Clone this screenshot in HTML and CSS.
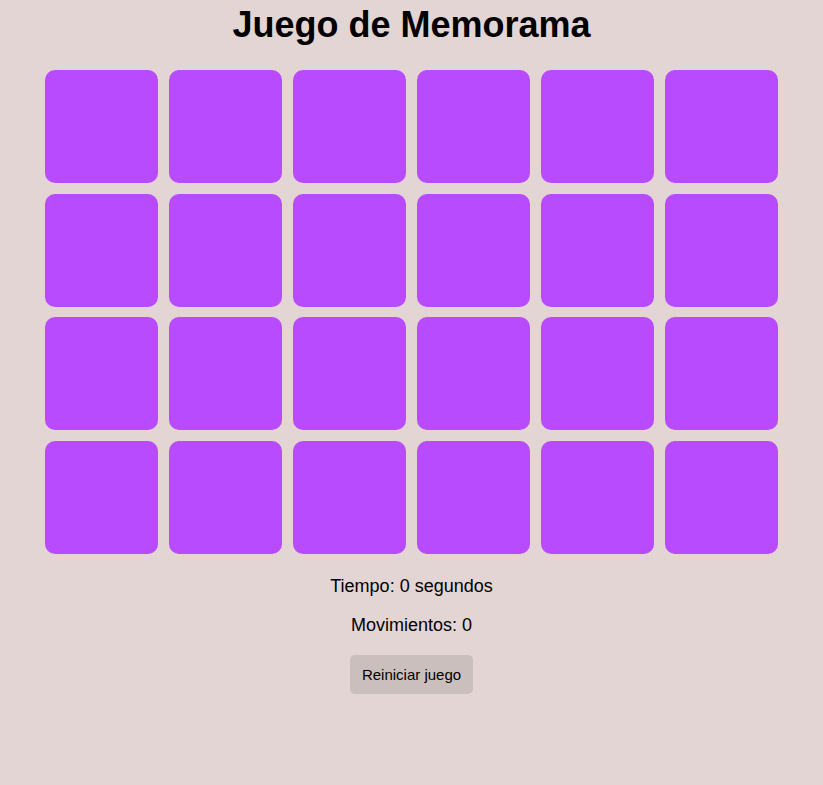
FILE: index.html
```html
<!DOCTYPE html>
<html lang="es">
<head>
<meta charset="utf-8">
<title>Juego de Memorama</title>
<link rel="stylesheet" href="styles.css">
</head>
<body>
<main class="game">
  <h1 class="title">Juego de Memorama</h1>
  <div class="board">
    <div class="card"></div><div class="card"></div><div class="card"></div><div class="card"></div><div class="card"></div><div class="card"></div>
    <div class="card"></div><div class="card"></div><div class="card"></div><div class="card"></div><div class="card"></div><div class="card"></div>
    <div class="card"></div><div class="card"></div><div class="card"></div><div class="card"></div><div class="card"></div><div class="card"></div>
    <div class="card"></div><div class="card"></div><div class="card"></div><div class="card"></div><div class="card"></div><div class="card"></div>
  </div>
  <p class="stat">Tiempo: 0 segundos</p>
  <p class="stat">Movimientos: 0</p>
  <button class="reset" type="button">Reiniciar juego</button>
</main>
</body>
</html>
```

FILE: styles.css
```css
html, body {
  margin: 0;
  padding: 0;
  background: #e3d5d4;
}

body {
  font-family: "Liberation Sans", Arial, sans-serif;
  color: #000;
}

.game {
  display: flex;
  flex-direction: column;
  align-items: center;
  padding-top: 5px;
}

.title {
  font-size: 36px;
  font-weight: bold;
  margin: 0 0 25px;
  line-height: 40px;
}

.board {
  width: 733px;
  display: grid;
  grid-template-columns: repeat(6, 1fr);
  grid-auto-rows: 112.9px;
  gap: 10.8px;
  margin-bottom: 4px;
}

.card {
  background: #b84bfd;
  border-radius: 10px;
}

.stat {
  font-size: 18px;
  line-height: 21px;
  margin: 18px 0 0;
}

.reset {
  margin-top: 19px;
  font-family: "Liberation Sans", Arial, sans-serif;
  font-size: 15px;
  line-height: 17px;
  padding: 11px 12px;
  border: none;
  border-radius: 5px;
  background: #cbbfbe;
  color: #000;
}
```
